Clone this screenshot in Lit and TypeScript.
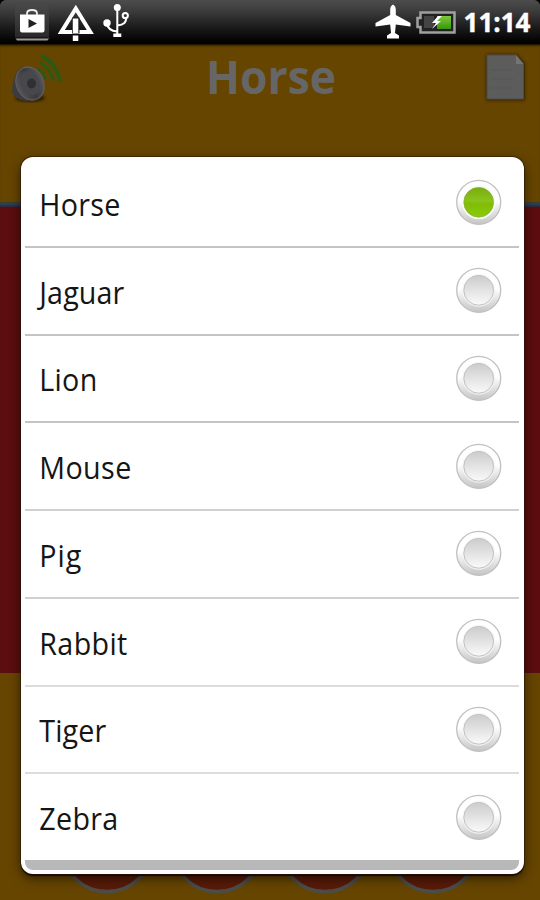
import { LitElement, html, css, svg } from "lit";
import { customElement, property } from "lit/decorators.js";

@customElement("status-bar")
class StatusBar extends LitElement {
  static styles = css`
    :host { display: flex; height: 44px; box-sizing: border-box; align-items: flex-start; justify-content: space-between;
      background: linear-gradient(#4c4c4c 0, #3a3a3a 12px, #1c1c1c 27px, #050505 40px, #000 44px); }
    .clock { font: 700 27px/30px "Open Sans", "Noto Sans", sans-serif; fill: #fff; stroke: #fff; stroke-width: .4px; }
    svg { display: block; }
  `;
  render() {
    return html`
      <svg width="140" height="44" viewBox="0 0 140 44">
        <defs><linearGradient id="tile" x2="0" y2="1"><stop stop-color="#484848"/><stop offset="1" stop-color="#303030"/></linearGradient></defs>
        <path d="M0 0h5Q1 1 0 5z" fill="#000"/>
        <rect x="15" y="5" width="34" height="34" rx="3" fill="url(#tile)" opacity=".8"/>
        <path d="M15 37.500h34.500l-2 3H17z" fill="#999"/>
        <path d="M15 37h34.500v1.500H15z" fill="#161616"/>
        <path d="M20 14.500h24.500v16q0 2-2 2H22q-2 0-2-2z" fill="#fff"/>
        <path d="M27 15v-1.500q0-3.500 5-3.500t5 3.500V15" fill="none" stroke="#eee" stroke-width="1.800"/>
        <path d="M28.500 19v9l8.500-4.500z" fill="#222"/>
        <path d="M75.800 8.500 61.300 32h29z" fill="none" stroke="#fff" stroke-width="4"/>
        <path d="M72 17.500h7.500v16H72z" fill="#222"/>
        <path d="M72.800 18.500h5.500v14.500h-5.500zM72.800 35.500h5.500V41h-5.500z" fill="#fff"/>
        <g fill="none" stroke="#fff" stroke-width="2">
          <path d="M117.300 8v27M107 24q1 6.500 10 7.500M126 17.500q1 7-8.500 8"/>
          <circle cx="125.300" cy="15.500" r="2.600"/>
        </g>
        <circle cx="117.300" cy="7.500" r="3.500" fill="#fff"/><circle cx="107" cy="23" r="3.700" fill="#fff"/>
        <path d="M113.300 33.500h8v3.500h-8z" fill="#fff"/>
      </svg>
      <svg width="170" height="44" viewBox="370 0 170 44">
        <defs><linearGradient id="cell" x2="0" y2="1"><stop stop-color="#7fc83c"/><stop offset="1" stop-color="#37960a"/></linearGradient></defs>
        <path d="M540 0h-5q4 1 5 5z" fill="#000"/>
        <path d="M393 4.500q-2.800 1.500-2.800 5V15L375.500 23v3.500l14.700-2 .8 8.500-4 2.500V38.500h12V35.500L395 33l.8-8.500 14.700 2V23L395.800 15V9.500q0-3.500-2.800-5z" fill="#fff"/>
        <path d="M420.500 12.500H454.500V32.500H420.500V27H417.500V18H420.500z" fill="#222" stroke="#a0a0a0" stroke-width="2.500"/>
        <path d="M424 16h10v12h-10z" fill="#444"/>
        <path d="M437 16h14v13h-14z" fill="url(#cell)"/>
        <path d="m438 16-6 7h4l-4 6 9-8h-4l5-5z" fill="#fff"/>
        <text class="clock" x="463.500" y="32" textLength="67" lengthAdjust="spacingAndGlyphs">11:14</text>
      </svg>`;
  }
}

@customElement("choice-row")
class ChoiceRow extends LitElement {
  @property() label = "";
  @property({ type: Number }) span = 80;
  @property({ type: Boolean }) checked = false;
  static styles = css`
    :host { display: flex; align-items: center; justify-content: space-between; padding: 0 16px 0 15px; }
    .label { font: 31.500px "Open Sans", "Noto Sans", sans-serif; fill: #151515; }
    svg { display: block; overflow: visible; }
    .dial { margin-bottom: 1px; }
  `;
  render() {
    return html`
      <svg width="140" height="44"><text class="label" transform="scale(.91 1)" x="-.8" y="34.600" textLength=${this.span / 0.91} lengthAdjust="spacing">${this.label}</text></svg>
      <svg class="dial" width="48" height="48" viewBox="-23.700 -24.300 48 48">
        <defs>
          <linearGradient id="ring" x2="0" y2="1"><stop offset=".45" stop-color="#fff"/><stop offset="1" stop-color="#c4c4c4"/></linearGradient>
          <linearGradient id="off" x2="0" y2="1"><stop stop-color="#ccc"/><stop offset="1" stop-color="#fafafa"/></linearGradient>
          <linearGradient id="on" x2="0" y2="1"><stop stop-color="#78ac0c"/><stop offset=".45" stop-color="#8bc31c"/><stop offset=".55" stop-color="#80bd04"/><stop offset="1" stop-color="#8acb0c"/></linearGradient>
        </defs>
        <circle r="22" fill="url(#ring)" stroke="#c0c0c0" stroke-width="1.300"/>
        ${this.checked
          ? svg`<circle r="17" fill="#fafafa"/><circle r="14.900" fill="url(#on)" stroke="#83ae2d" stroke-width=".7"/>`
          : svg`<circle r="16.500" fill="#f5f5f5" opacity=".8"/><circle r="14.900" fill="url(#off)" stroke="#c2c2c2"/>`}
      </svg>`;
  }
}

@customElement("app-root")
class AppRoot extends LitElement {
  static styles = css`
    :host { display: block; position: relative; width: 540px; height: 900px; overflow: hidden; background: #664500; }
    .screen { display: flex; flex-direction: column; height: 900px; }
    .header { height: 158px; box-shadow: inset 0 3px 3px -2px #000; }
    .title { font: 700 46px "Open Sans", "Noto Sans", sans-serif; fill: #666; }
    .rule { height: 5px; background: linear-gradient(#3f4128, #26415c 45%, #352331); }
    .band { height: 466px; background: #5c0d10; }
    .footer { flex: 1; }
    svg { display: block; }
    .dialog { position: absolute; left: 21px; top: 157px; width: 503px; height: 717px; box-sizing: border-box;
      display: flex; flex-direction: column; padding: 3px 5px 4px 4px; border-radius: 12px; background: #fff;
      box-shadow: 0 0 0 1px #2b100880, 0 2px 1px #1b0c00, 0 4px 12px #0009; }
    .list { display: grid; grid-template-rows: repeat(7, 87.75px) 85.75px; }
    choice-row { border-bottom: 2px solid #c4c4c4; box-sizing: border-box; }
    choice-row:nth-child(n + 4) { border-color: #d0d0d0; }
    choice-row:nth-child(n + 6) { border-color: #dcdcdc; }
    choice-row:last-child { border: 0; }
    .edge { height: 10px; background: #b8b8b8; border-radius: 0 0 8px 8px; }
  `;
  private rows: [string, number][] = [["Horse", 81], ["Jaguar", 85], ["Lion", 58], ["Mouse", 92], ["Pig", 42], ["Rabbit", 88], ["Tiger", 67], ["Zebra", 79]];
  render() {
    return html`
      <div class="screen">
        <status-bar></status-bar>
        <div class="header">
          <svg width="540" height="114" viewBox="0 44 540 114">
            <defs>
              <linearGradient id="cone"><stop stop-color="#555"/><stop offset=".5" stop-color="#3b3b3f"/><stop offset="1" stop-color="#55555a"/></linearGradient>
              <filter id="soft"><feGaussianBlur stdDeviation="1.500"/></filter>
            </defs>
            <ellipse cx="30" cy="98" rx="15" ry="4" fill="#2c1d00" filter="url(#soft)"/>
            <path d="M22 67q-9 5-10 25 3 8 14 9l8-2z" fill="#3c3c40"/>
            <ellipse cx="30" cy="83.500" rx="13.500" ry="17" transform="rotate(-24 30 83.500)" fill="url(#cone)" stroke="#5c5c62" stroke-width="1.300"/>
            <ellipse cx="30" cy="83" rx="9.500" ry="12.500" transform="rotate(-24 30 83)" fill="#47474c"/>
            <ellipse cx="31.500" cy="83.500" rx="4.500" ry="5" fill="#303034"/>
            <g fill="none" stroke="#285b14" stroke-width="2.600"><path d="M38 69q6 2 7.500 10"/><path d="M40 62.500q10 4.500 13 18" stroke-width="3"/><path d="M41 56q15 6 19 26" stroke-width="3.600"/></g>
            <text class="title" x="206" y="94" textLength="130" lengthAdjust="spacingAndGlyphs">Horse</text>
            <path d="M485 54h31l8 9v37h-39z" transform="translate(1 .500)" fill="#332200" filter="url(#soft)"/>
            <path d="M487 55h29l7.500 9v35H487z" fill="#5c5c5c" stroke="#4c4c4a"/>
            <path d="m516 55 7.500 9H516z" fill="#747474"/>
            <path d="M491 70h23M491 79h23M491 88h23" stroke="#575757"/>
          </svg>
        </div>
        <div class="rule"></div>
        <div class="band"></div>
        <div class="footer">
          <svg width="540" height="227" viewBox="0 673 540 227">
            ${[107, 217, 325, 433].map((x) => svg`<circle cx=${x} cy="846" r="45.500" fill="#581b08" stroke="#4c4c49" stroke-width="3.500"/>`)}
          </svg>
        </div>
      </div>
      <div class="dialog">
        <div class="list">
          ${this.rows.map(([label, span], i) => html`<choice-row .label=${label} .span=${span} .checked=${i === 0}></choice-row>`)}
        </div>
        <div class="edge"></div>
      </div>`;
  }
}
